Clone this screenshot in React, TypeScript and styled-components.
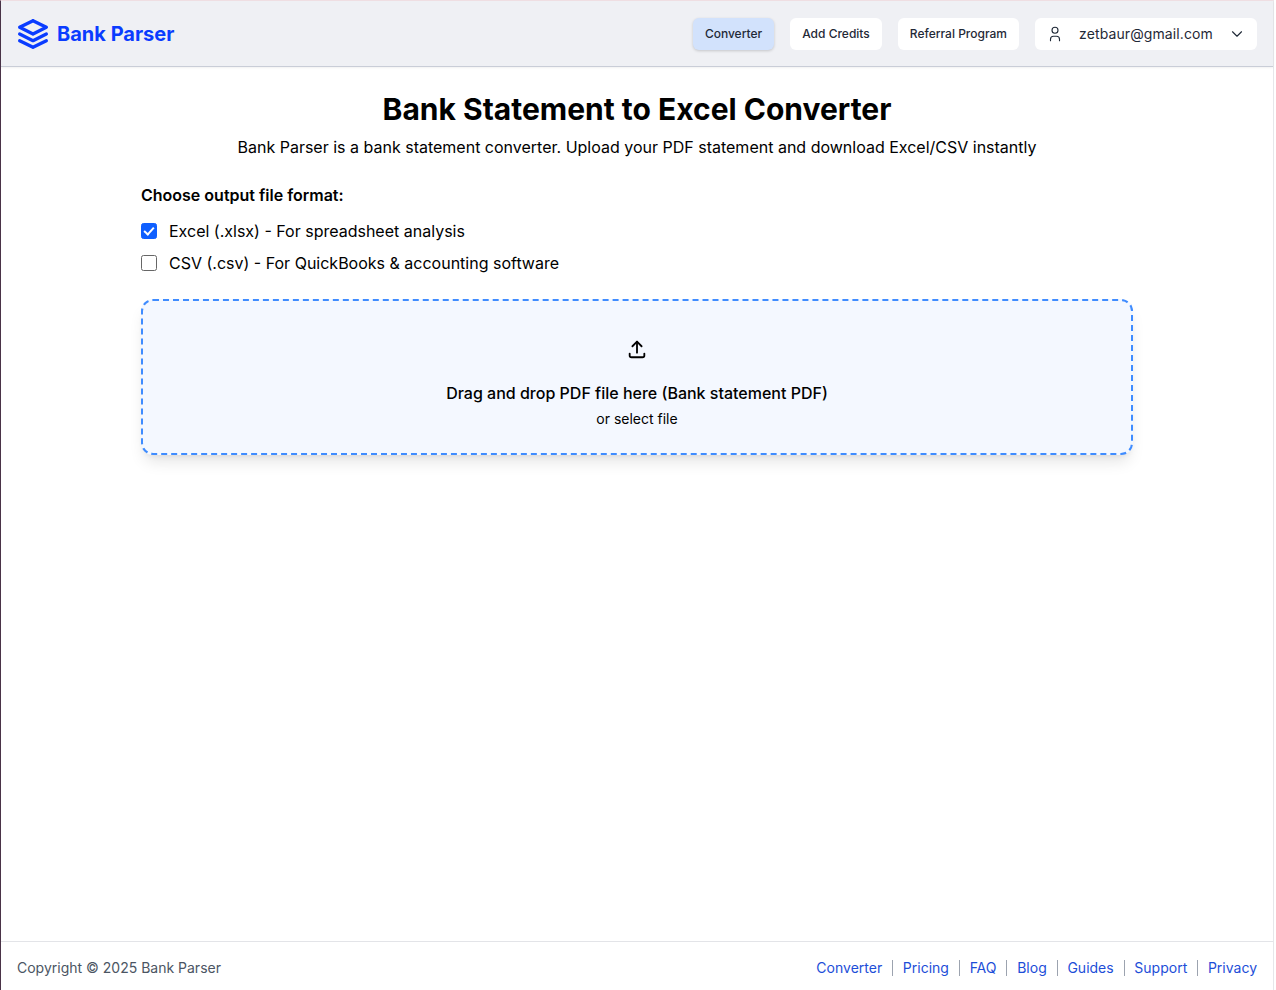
import React from "react";
import styled, { createGlobalStyle } from "styled-components";
import { TbChevronDown, TbStack2, TbUpload, TbUser } from "react-icons/tb";

const GlobalStyle = createGlobalStyle`
  html, body {
    margin: 0;
    padding: 0;
    background: #fff;
  }
  body {
    font-family: Inter, "Liberation Sans", sans-serif;
    color: #000;
  }
`;

const Page = styled.div`
  box-sizing: border-box;
  height: 990px;
  display: flex;
  flex-direction: column;
  border-top: 1px solid #f0dfe3;
  border-left: 1px solid #4a3348;
  border-right: 1px solid #e6e7ea;
  margin-right: 2px;
`;

const Header = styled.header`
  box-sizing: border-box;
  height: 66px;
  flex: none;
  display: flex;
  align-items: center;
  justify-content: space-between;
  padding: 0 16px;
  background: #eff0f4;
  border-bottom: 1px solid #c9cdd7;
  box-shadow: 0 1px 2px rgba(0, 0, 0, 0.06);
`;

const Brand = styled.a`
  display: flex;
  align-items: center;
  gap: 4px;
  margin-left: -4px;
  color: #0a3cff;
  font-size: 20px;
  font-weight: 700;
`;

const Nav = styled.nav`
  display: flex;
  align-items: center;
  gap: 16px;
`;

const NavButton = styled.button<{ $active?: boolean }>`
  height: 32px;
  padding: 0 12px;
  border: 0;
  border-radius: 6px;
  font-family: inherit;
  font-size: 12px;
  font-weight: 500;
  color: #1f2937;
  background: ${(p) => (p.$active ? "#d2e2fc" : "#fff")};
  box-shadow: ${(p) => (p.$active ? "0 1px 3px rgba(0, 0, 0, 0.18)" : "none")};
`;

const UserButton = styled.button`
  height: 32px;
  width: 222px;
  padding: 0 11px;
  border: 0;
  border-radius: 6px;
  display: flex;
  align-items: center;
  justify-content: space-between;
  font-family: inherit;
  font-size: 14px;
  font-weight: 400;
  letter-spacing: 0.1px;
  color: #1f2937;
  background: #fff;
`;

const Main = styled.main`
  flex: 1;
  box-sizing: border-box;
  width: 992px;
  margin-left: 140px;
  padding-top: 24px;
`;

const Title = styled.h1`
  margin: 0;
  text-align: center;
  font-size: 30px;
  line-height: 36px;
  font-weight: 700;
`;

const Subtitle = styled.p`
  margin: 8px 0 0;
  text-align: center;
  font-size: 16px;
  line-height: 24px;
`;

const FormatLabel = styled.div`
  margin-top: 24px;
  font-size: 16px;
  line-height: 24px;
  font-weight: 600;
`;

const FormatList = styled.div`
  margin-top: 12px;
  display: flex;
  flex-direction: column;
  gap: 8px;
`;

const FormatOption = styled.label`
  display: flex;
  align-items: center;
  gap: 12px;
  font-size: 16px;
  line-height: 24px;
`;

const Checkbox = styled.input`
  appearance: none;
  box-sizing: border-box;
  width: 16px;
  height: 16px;
  margin: 0;
  border: 1px solid #666;
  border-radius: 2.5px;
  background: #fff;
  display: grid;
  place-items: center;

  &:checked {
    border-color: #0f5fff;
    background: #0f5fff;
  }
  &:checked::after {
    content: "";
    box-sizing: border-box;
    width: 6px;
    height: 10px;
    margin-top: -2px;
    border: solid #fff;
    border-width: 0 2.5px 2.5px 0;
    transform: rotate(42deg);
  }
`;

const DropZone = styled.div`
  box-sizing: border-box;
  margin-top: 24px;
  height: 156px;
  padding-top: 37px;
  display: flex;
  flex-direction: column;
  align-items: center;
  background: #f4f8ff;
  border: 2px dashed #3f8cff;
  border-radius: 12px;
  box-shadow: 0 10px 15px -3px rgba(0, 0, 0, 0.1), 0 4px 6px -4px rgba(0, 0, 0, 0.1);
`;

const DropTitle = styled.div`
  margin-top: 21px;
  font-size: 16px;
  line-height: 24px;
  font-weight: 500;
`;

const DropHint = styled.div`
  margin-top: 4px;
  font-size: 14px;
  line-height: 20px;
`;

const Footer = styled.footer`
  box-sizing: border-box;
  height: 49px;
  flex: none;
  display: flex;
  align-items: center;
  justify-content: space-between;
  padding: 4px 16px 0;
  border-top: 1px solid #e3e4e8;
  font-size: 14px;
  line-height: 16px;
`;

const Copyright = styled.span`
  color: #4b5563;
`;

const FooterLinks = styled.div`
  display: flex;
  align-items: center;
`;

const FooterLink = styled.a`
  color: #1d4ed8;
  padding: 0 9.85px;
  border-left: 1px solid #9ca3af;

  &:first-child {
    border-left: 0;
  }
  &:last-child {
    padding-right: 0;
  }
`;

const links = ["Converter", "Pricing", "FAQ", "Blog", "Guides", "Support", "Privacy"];

export default function App() {
  return (
    <Page>
      <GlobalStyle />
      <Header>
        <Brand>
          <TbStack2 size={40} />
          Bank Parser
        </Brand>
        <Nav>
          <NavButton $active>Converter</NavButton>
          <NavButton>Add Credits</NavButton>
          <NavButton>Referral Program</NavButton>
          <UserButton>
            <TbUser size={18} strokeWidth={1.5} />
            zetbaur@gmail.com
            <TbChevronDown size={18} strokeWidth={1.5} />
          </UserButton>
        </Nav>
      </Header>
      <Main>
        <Title>Bank Statement to Excel Converter</Title>
        <Subtitle>
          Bank Parser is a bank statement converter. Upload your PDF statement and download Excel/CSV instantly
        </Subtitle>
        <FormatLabel>Choose output file format:</FormatLabel>
        <FormatList>
          <FormatOption>
            <Checkbox type="checkbox" defaultChecked />
            Excel (.xlsx) - For spreadsheet analysis
          </FormatOption>
          <FormatOption>
            <Checkbox type="checkbox" />
            CSV (.csv) - For QuickBooks &amp; accounting software
          </FormatOption>
        </FormatList>
        <DropZone>
          <TbUpload size={22} />
          <DropTitle>Drag and drop PDF file here (Bank statement PDF)</DropTitle>
          <DropHint>or select file</DropHint>
        </DropZone>
      </Main>
      <Footer>
        <Copyright>Copyright © 2025 Bank Parser</Copyright>
        <FooterLinks>
          {links.map((l) => (
            <FooterLink key={l}>{l}</FooterLink>
          ))}
        </FooterLinks>
      </Footer>
    </Page>
  );
}
